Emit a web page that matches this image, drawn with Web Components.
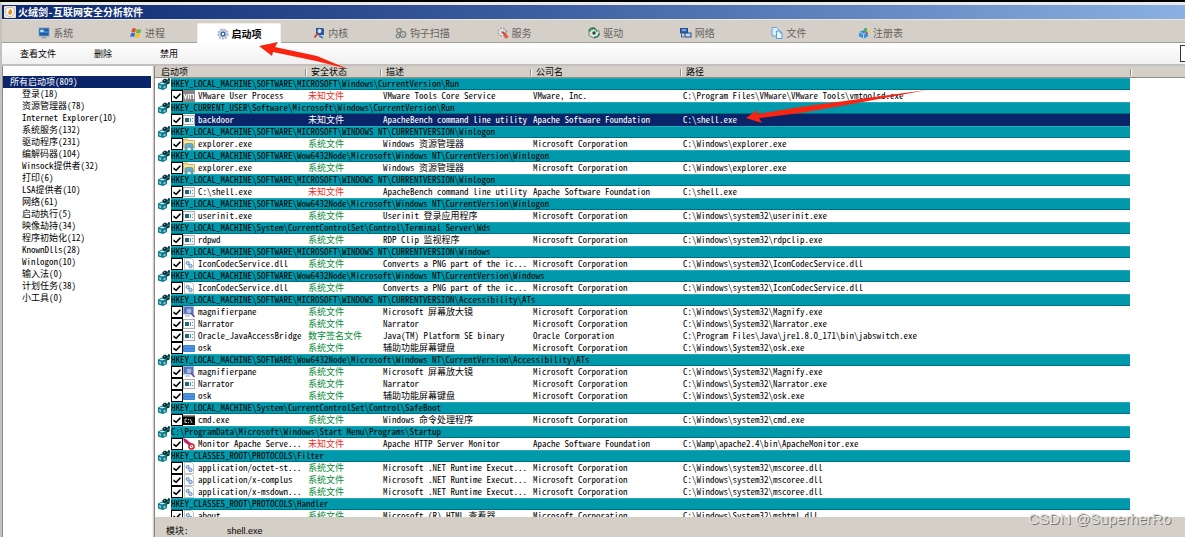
<!DOCTYPE html>
<html lang="zh-CN">
<head>
<meta charset="utf-8">
<title>火绒剑-互联网安全分析软件</title>
<style>
  html, body { margin: 0; height: 100%; }
  body {
    overflow: hidden;
    background: #d4d0c8;
    color: #000;
    font: 9px/12px "Noto Sans Mono CJK SC", "Noto Sans CJK SC", "Liberation Mono", monospace;
    font-feature-settings: "hwid";
  }
</style>
</head>
<body>
<hs-window>
  <hs-titlebar slot="title">火绒剑-互联网安全分析软件</hs-titlebar>
  <hs-tabs slot="tabs">
    <hs-tab icon="monitor">系统</hs-tab>
    <hs-tab icon="flag">进程</hs-tab>
    <hs-tab icon="gear" active>启动项</hs-tab>
    <hs-tab icon="kernel">内核</hs-tab>
    <hs-tab icon="hook">钩子扫描</hs-tab>
    <hs-tab icon="service">服务</hs-tab>
    <hs-tab icon="driver">驱动</hs-tab>
    <hs-tab icon="network">网络</hs-tab>
    <hs-tab icon="files">文件</hs-tab>
    <hs-tab icon="registry">注册表</hs-tab>
  </hs-tabs>
  <hs-toolbar slot="tools"></hs-toolbar>
  <hs-tree slot="side"></hs-tree>
  <hs-list slot="list"></hs-list>
  <hs-status slot="status" label="模块:">shell.exe</hs-status>
</hs-window>

<script>
const ICONS = {
  shield: '<rect width="12" height="12" rx="1" fill="#e9e4dc"/><path d="M6 1l4.300 1.500v3.500c0 2.500-2 4-4.300 5-2.300-1-4.300-2.500-4.300-5V2.500z" fill="#fff" stroke="#b9a48e" stroke-width=".7"/><path d="M6 2.500c2 2 2.500 3 2 4.500-.4 1.200-1.200 1.700-2 2-1.500-.5-2.300-2-1.500-3.500.5-1 1.200-1.500 1.500-3z" fill="#f0872a"/>',
  monitor: '<rect x="1" y="1" width="10" height="8" fill="#1f5fa8" stroke="#7e9cc0" stroke-width=".8"/><path d="M2.500 3h3v2h-3zM6.500 5h3" fill="#cfe6fb" stroke="#8fd0f5" stroke-width=".8"/><path d="M4 9.500h4l1 2H3z" fill="#9aa7b8"/>',
  flag: '<path d="M2.200 1.500Q4 .6 6 1.800L5.200 5.500Q3.200 4.500 1.300 5.400z" fill="#e2502a"/><path d="M6.700 2.100Q9 3 11.300 1.900l-.9 3.800Q8 6.700 5.900 5.800z" fill="#6db335"/><path d="M1.100 6.200Q3 5.400 5 6.300L4.200 10Q2.200 9 .2 9.900z" fill="#2f6fd0"/><path d="M5.700 6.600Q8 7.500 10.200 6.500l-.9 3.800Q7 11.300 4.900 10.300z" fill="#f4c020"/>',
  gear: '<circle cx="6" cy="6" r="4.800" fill="#d7dce6" stroke="#a9b1c2" stroke-width="1.600" stroke-dasharray="2 1.200"/><circle cx="6" cy="6" r="4" fill="#c3cee2"/><circle cx="6" cy="6" r="2.500" fill="#2d57a0"/><circle cx="6" cy="6" r="1.300" fill="#f2f6fc"/>',
  kernel: '<path d="M3 1h7l1 1v6H3z" fill="#2b5da8"/><circle cx="6.500" cy="4" r="2.600" fill="#cfe3fa" stroke="#243f80"/><path d="M5 6L1.500 10.500" stroke="#d33a2c" stroke-width="1.800"/><path d="M6 8.500l4 2.500" stroke="#3b78c4" stroke-width="1.600"/>',
  hook: '<g fill="none" stroke="#7d8482" stroke-width="1.300"><circle cx="4" cy="3.500" r="2.200"/><circle cx="8" cy="7.500" r="2.800"/><circle cx="3" cy="9" r="1.800"/></g><circle cx="8" cy="7.500" r="1" fill="#8fa7b0"/>',
  service: '<circle cx="5" cy="5" r="3.700" fill="#eeeeeb" stroke="#9c9c98" stroke-width="1.500" stroke-dasharray="1.800 1.200"/><circle cx="5" cy="5" r="1.500" fill="#b4b8ba"/><path d="M5.500 5l4.500 4.500" stroke="#d8402f" stroke-width="2.200"/><circle cx="9.200" cy="9.500" r="2" fill="#e05b48"/><path d="M7 2l4 3" stroke="#aaa"/>',
  driver: '<path d="M1 5l5-3.500L11 4v4.500L6 11 1 8.500z" fill="#dfe6df" stroke="#59756a" stroke-width=".8"/><path d="M1 4.500A5 4 0 016 1l1.500 1.500M11 6.500A5 4 0 016 10.500" fill="none" stroke="#29785b" stroke-width="1.600"/><circle cx="6" cy="6" r="1.700" fill="#24523f"/><circle cx="8.500" cy="4" r="1" fill="#3a9b58"/>',
  network: '<rect x=".5" y="1.500" width="7" height="4.500" fill="#2b66b8" stroke="#234a8c"/><rect x="5" y="6" width="6" height="4" fill="#bcd8f5" stroke="#234a8c"/><path d="M1.500 7v3h2.500" fill="none" stroke="#345fa0"/><path d="M2 3h4" stroke="#cbe2fa"/>',
  files: '<path d="M1 .5h4.500L7.500 2.500V9H1z" fill="#d7edfb" stroke="#5aa2d5" stroke-width=".9"/><path d="M5.500 4h3.500l2 2v5.500H5.500z" fill="#e9f6fe" stroke="#4a94cc" stroke-width=".9"/><path d="M9 4v2h2" fill="none" stroke="#4a94cc" stroke-width=".8"/>',
  registry: '<path d="M1 5l5-2 4 2v4.500L6 11.500 1 9.500z" fill="#3f93d2"/><path d="M1 5l4.500 2v4.200M5.500 7L10 5" fill="none" stroke="#bfe2f8" stroke-width=".8"/><path d="M6 1.500l3-.5v2.500l-3 .5z" fill="#3fae4d"/><path d="M9.500 2.500L12 3.500v2L9.500 5z" fill="#f1cc33"/><path d="M7.500 4.500L10 6 8 7.500z" fill="#d2433b"/>',
  reg: '<path d="M0 5.500l4-2 5 1v5.500L5 12 0 10.500z" fill="#0b7583"/><path d="M1.200 7l2 .7v2.500l-2-.7zM5.500 8.200l2-.8v2.300l-2 .8z" fill="#7fd3db"/><path d="M1 5.700l3-1.200 3.500.8L4.500 6.500z" fill="#b9eef2"/><path d="M4.500 2l2.500-1.500L9 1.500v2.500L7 5 4.500 4zM8.500 3l2-3 1.500.5-.5 5-2.500 1z" fill="#08303a"/><path d="M6 2.500h1M10 2.500v1.500" stroke="#4cbccb"/>',
  vm: '<rect y="0" width="12" height="12" fill="#858585"/><path d="M1 4l1.500 4.500L4 4M5.500 9V4.500l2 0V9M7.500 4.500h3V9" fill="none" stroke="#f4f4f4" stroke-width="1.200"/>',
  app: '<rect x=".5" y="1.500" width="11" height="9" fill="#f6f8f8" stroke="#a5afb4"/><rect x="2" y="4" width="4" height="4" fill="#1d6b74"/><path d="M7.500 4v4M9.500 4v1M9.500 7v1" stroke="#6b8e98"/>',
  folder: '<path d="M.5 1h4l1 1.500h6V10H.5z" fill="#f1d677" stroke="#b99b45" stroke-width=".7"/><path d="M1 4h10" stroke="#fff3bd"/><path d="M2 12V7.500q0-2 2-2h4q2 0 2 2V12H8V9H4v3z" fill="#5cb1de" stroke="#317fae" stroke-width=".5"/>',
  dll: '<path d="M1.500.5h7l2 2v9h-9z" fill="#fff" stroke="#adb5bc" stroke-width=".8"/><circle cx="4.700" cy="5" r="1.600" fill="#c6ddf2" stroke="#5484b8" stroke-width=".9"/><circle cx="7.500" cy="8" r="1.700" fill="#c6ddf2" stroke="#5484b8" stroke-width=".9"/>',
  magnify: '<rect x=".5" y=".500" width="10" height="7.500" fill="#4d75c8" stroke="#9db1dc"/><circle cx="6" cy="5" r="2.800" fill="#dce9ff" fill-opacity=".6" stroke="#6980a8"/><path d="M8 7l3.500 4" stroke="#6b4d8c" stroke-width="1.800"/><path d="M2 10h5" stroke="#b6c3dc" stroke-width="1.500"/>',
  keyboard: '<rect y="3" width="12" height="7" rx="1" fill="#3a83d6"/><path d="M1.500 5h9M1.500 8h9" stroke="#86b8ee" stroke-dasharray="1 1"/>',
  cmd: '<rect y="1.500" width="12" height="9.500" fill="#080808"/><path d="M0 2h12" stroke="#9a9a9a"/><path d="M4 5H2v3.500h2M5.500 5v1M5.500 8v1M7 5l2 4" fill="none" stroke="#ddd" stroke-width=".9"/>',
  feather: '<path d="M0 0l3 1 6 5-2 2L1 4z" fill="#d22a6c"/><path d="M1 1l6 6" stroke="#6c2b94"/><circle cx="8.500" cy="8.500" r="2.600" fill="#fff" stroke="#d81f26" stroke-width="1.500"/><path d="M7.500 7.500l2 2" stroke="#d81f26"/>'
};

const define = (name, css, html) => customElements.define(name, class extends HTMLElement {
  connectedCallback() {
    if (this.shadowRoot) return;
    const root = this.attachShadow({ mode: 'open' });
    root.innerHTML = `<style>:host,*{box-sizing:border-box}${css}</style>` + (typeof html === 'function' ? html(this) : html);
  }
});

define('hs-icon', ':host{display:block;flex:none;width:12px;height:12px}svg{display:block;width:100%;height:100%}',
  el => `<svg viewBox="0 0 12 12" aria-hidden="true">${ICONS[el.getAttribute('name')]}</svg>`);

define('hs-arrow', `
  :host{display:block;position:absolute;pointer-events:none;z-index:5}
  svg{display:block;width:100%;height:100%}`,
  el => `<svg viewBox="${el.getAttribute('box')}" aria-hidden="true"><path d="${el.getAttribute('shape')}" fill="#fb2410"/></svg>`);

define('hs-window', `
  :host{display:flex;flex-direction:column;height:100vh;border-top:2px solid #000;position:relative;overflow:hidden}
  .frame{display:flex;flex-direction:column;flex:1;min-height:0;border-top:3px solid #eceae6;border-left:2px solid #c4c2be}
  .body{display:flex;flex:1;min-height:0}
  .side{flex:0 0 150px;background:#fff;border-left:1px solid #8a8a86;overflow:hidden}
  .split{flex:0 0 3px;background:#d4d0c8;border-left:1px solid #f4f2ee;border-right:1px solid #86847e}
  .main{display:flex;flex-direction:column;flex:1;min-width:0}
  .list{flex:1;min-height:0;overflow:hidden;background:#fff}
  .first{left:259px;top:38px;width:90px;height:30px}
  .second{left:744px;top:84px;width:184px;height:40px}
  .mark{position:absolute;right:14px;bottom:9px;z-index:6;font:15px/18px "Liberation Sans",Arial,sans-serif;
    color:#e4e2df;text-shadow:1px 1px 0 #77756f}`,
  `<div class="frame">
    <slot name="title"></slot><slot name="tabs"></slot><slot name="tools"></slot>
    <div class="body">
      <div class="side"><slot name="side"></slot></div>
      <div class="split"></div>
      <div class="main"><div class="list"><slot name="list"></slot></div><slot name="status"></slot></div>
    </div>
  </div>
  <hs-arrow class="first" box="0 0 90 30" shape="M0 6L19 2 16 7 58 16 89 29 57 21 14 12 13 16z"></hs-arrow>
  <hs-arrow class="second" box="0 0 184 40" shape="M2 32L13 24 13 28 56 21 108 14 183 4 108 18 56 27 15 32 18 37z"></hs-arrow>
  <div class="mark">CSDN @SuperherRo</div>`);

define('hs-titlebar', `
  :host{display:flex;align-items:center;gap:2px;flex:0 0 14px;padding-left:2px;color:#fff;
    font-size:10px;font-weight:700;line-height:14px;background:linear-gradient(90deg,#0c2870,#3c5e9f 45%,#8ab1e2)}
  h1{margin:0;font:inherit}`,
  '<hs-icon name="shield"></hs-icon><h1><slot></slot></h1>');

define('hs-tabs', `
  :host{display:flex;flex:0 0 24px;padding:3px 0 0 8px;background:#d4d0c8;border-top:1px solid #e9e6df;border-bottom:1px solid #a09e99}`,
  '<slot></slot>');

define('hs-tab', `
  :host{display:flex;flex:0 0 7.8%;padding:0 4px}
  button{display:flex;flex:1;align-items:center;justify-content:center;gap:3px;border:1px solid transparent;border-bottom:0;
    padding:0;background:none;color:#66645f;font:inherit;font-size:10px;line-height:16px;white-space:nowrap}
  :host([active]) button{background:#fff;color:#000;font-weight:700;border-color:#f2f0ec;border-radius:2px 2px 0 0;margin-bottom:-1px}`,
  el => `<button type="button"${el.hasAttribute('active') ? ' aria-current="page"' : ''}><hs-icon name="${el.getAttribute('icon')}"></hs-icon><span><slot></slot></span></button>`);

define('hs-toolbar', `
  :host{display:flex;flex:0 0 23px;align-items:center;padding-left:18px;overflow:hidden;
    background:linear-gradient(#fff,#f0f0f0);border-bottom:2px solid #c2c0bc}
  button{border:0;padding:0;margin-right:38px;background:none;font:inherit;color:#000}
  button + button{margin-right:48px}
  input{margin:0 -115px 0 auto;width:120px;height:17px;border:1px solid #333;padding:0 3px;background:#fff;font:inherit}`,
  `<button type="button">查看文件</button><button type="button">删除</button><button type="button">禁用</button>
   <input type="text" aria-label="搜索">`);

const TREE = ['登录(18)', '资源管理器(78)', 'Internet Explorer(10)', '系统服务(132)', '驱动程序(231)', '编解码器(104)',
  'Winsock提供者(32)', '打印(6)', 'LSA提供者(10)', '网络(61)', '启动执行(5)', '映像劫持(34)', '程序初始化(12)',
  'KnownDlls(28)', 'Winlogon(10)', '输入法(0)', '计划任务(38)', '小工具(0)'];

define('hs-tree', `
  :host{display:block;padding:10px 1px 0 0}
  ul{list-style:none;margin:0;padding:0}
  button{display:block;width:100%;height:12px;border:0;padding:0 0 0 19px;background:none;color:#000;font:inherit;text-align:left;white-space:nowrap}
  .root{padding-left:7px;background:#0a246a;color:#fff}`,
  `<ul><li><button type="button" class="root">所有启动项(809)</button><ul>${TREE.map(t => `<li><button type="button">${t}</button></li>`).join('')}</ul></li></ul>`);

/* "#" opens a registry group; other lines are icon|name|status|description|company|path. */
const DATA = String.raw`
#HKEY_LOCAL_MACHINE\SOFTWARE\MICROSOFT\Windows\CurrentVersion\Run
vm|VMware User Process|未知文件|VMware Tools Core Service|VMware, Inc.|C:\Program Files\VMware\VMware Tools\vmtoolsd.exe
#HKEY_CURRENT_USER\Software\Microsoft\Windows\CurrentVersion\Run
app|backdoor|未知文件|ApacheBench command line utility|Apache Software Foundation|C:\shell.exe|selected
#HKEY_LOCAL_MACHINE\SOFTWARE\MICROSOFT\WINDOWS NT\CURRENTVERSION\Winlogon
folder|explorer.exe|系统文件|Windows 资源管理器|Microsoft Corporation|C:\Windows\explorer.exe
#HKEY_LOCAL_MACHINE\SOFTWARE\Wow6432Node\Microsoft\Windows NT\CurrentVersion\Winlogon
folder|explorer.exe|系统文件|Windows 资源管理器|Microsoft Corporation|C:\Windows\explorer.exe
#HKEY_LOCAL_MACHINE\SOFTWARE\MICROSOFT\WINDOWS NT\CURRENTVERSION\Winlogon
app|C:\shell.exe|未知文件|ApacheBench command line utility|Apache Software Foundation|C:\shell.exe
#HKEY_LOCAL_MACHINE\SOFTWARE\Wow6432Node\Microsoft\Windows NT\CurrentVersion\Winlogon
app|userinit.exe|系统文件|Userinit 登录应用程序|Microsoft Corporation|C:\Windows\system32\userinit.exe
#HKEY_LOCAL_MACHINE\System\CurrentControlSet\Control\Terminal Server\Wds
app|rdpwd|系统文件|RDP Clip 监视程序|Microsoft Corporation|C:\Windows\system32\rdpclip.exe
#HKEY_LOCAL_MACHINE\SOFTWARE\MICROSOFT\WINDOWS NT\CURRENTVERSION\Windows
dll|IconCodecService.dll|系统文件|Converts a PNG part of the ic...|Microsoft Corporation|C:\Windows\system32\IconCodecService.dll
#HKEY_LOCAL_MACHINE\SOFTWARE\Wow6432Node\Microsoft\Windows NT\CurrentVersion\Windows
dll|IconCodecService.dll|系统文件|Converts a PNG part of the ic...|Microsoft Corporation|C:\Windows\system32\IconCodecService.dll
#HKEY_LOCAL_MACHINE\SOFTWARE\MICROSOFT\WINDOWS NT\CURRENTVERSION\Accessibility\ATs
magnify|magnifierpane|系统文件|Microsoft 屏幕放大镜|Microsoft Corporation|C:\Windows\System32\Magnify.exe
app|Narrator|系统文件|Narrator|Microsoft Corporation|C:\Windows\System32\Narrator.exe
app|Oracle_JavaAccessBridge|数字签名文件|Java(TM) Platform SE binary|Oracle Corporation|C:\Program Files\Java\jre1.8.0_171\bin\jabswitch.exe
keyboard|osk|系统文件|辅助功能屏幕键盘|Microsoft Corporation|C:\Windows\System32\osk.exe
#HKEY_LOCAL_MACHINE\SOFTWARE\Wow6432Node\Microsoft\Windows NT\CurrentVersion\Accessibility\ATs
magnify|magnifierpane|系统文件|Microsoft 屏幕放大镜|Microsoft Corporation|C:\Windows\System32\Magnify.exe
app|Narrator|系统文件|Narrator|Microsoft Corporation|C:\Windows\System32\Narrator.exe
keyboard|osk|系统文件|辅助功能屏幕键盘|Microsoft Corporation|C:\Windows\System32\osk.exe
#HKEY_LOCAL_MACHINE\System\CurrentControlSet\Control\SafeBoot
cmd|cmd.exe|系统文件|Windows 命令处理程序|Microsoft Corporation|C:\Windows\system32\cmd.exe
#C:\ProgramData\Microsoft\Windows\Start Menu\Programs\Startup
feather|Monitor Apache Serve...|未知文件|Apache HTTP Server Monitor|Apache Software Foundation|C:\Wamp\apache2.4\bin\ApacheMonitor.exe
#HKEY_CLASSES_ROOT\PROTOCOLS\Filter
dll|application/octet-st...|系统文件|Microsoft .NET Runtime Execut...|Microsoft Corporation|C:\Windows\system32\mscoree.dll
dll|application/x-complus|系统文件|Microsoft .NET Runtime Execut...|Microsoft Corporation|C:\Windows\system32\mscoree.dll
dll|application/x-msdown...|系统文件|Microsoft .NET Runtime Execut...|Microsoft Corporation|C:\Windows\system32\mscoree.dll
#HKEY_CLASSES_ROOT\PROTOCOLS\Handler
dll|about|系统文件|Microsoft (R) HTML 查看器|Microsoft Corporation|C:\Windows\System32\mshtml.dll
`.trim().split('\n');

const rowHtml = line => {
  if (line[0] === '#') {
    return `<tr class="group"><th colspan="5" scope="rowgroup"><div class="line"><hs-icon name="reg"></hs-icon><span class="bar">${line.slice(1)}</span></div></th><td></td></tr>`;
  }
  const [icon, name, status, desc, company, path, sel] = line.split('|');
  const tone = status === '未知文件' ? 'bad' : 'good';
  return `<tr class="${sel || ''}"><td class="name"><label class="line"><input type="checkbox" checked><hs-icon name="${icon}"></hs-icon><span class="text">${name}</span></label></td>
    <td class="${tone}">${status}</td><td>${desc}</td><td>${company}</td><td>${path}</td><td class="rest"></td></tr>`;
};

define('hs-list', `
  :host{display:block}
  table{width:100%;table-layout:fixed;border-collapse:separate;border-spacing:0}
  .c1,.c3,.c4{width:150px}.c2{width:75px}.c5{width:450px}
  th,td{padding:0 0 0 3px;height:12px;line-height:12px;font-weight:400;text-align:left;white-space:nowrap}
  thead th{padding:0 0 0 6px;background:linear-gradient(90deg,#8e8c86 0 1px,#fff 1px 2px,transparent 2px) 0 3px/100% 7px no-repeat #d4d0c8;
    box-shadow:inset 0 -1px #8e8c86}
  thead th:first-child{background:#d4d0c8}
  .group th,.name{padding:0}
  .line{display:flex;align-items:center;height:12px}
  .group hs-icon{margin:0 1px 0 3px}
  .bar{flex:1;height:12px;background:#0099ab;border-bottom:1px solid #00707f;border-top:1px solid #23a9b8;line-height:10px}
  input{appearance:none;display:grid;place-items:center;flex:none;width:12px;height:12px;margin:0 0 0 16px;border:1px solid #000;background:#fff}
  input::before{content:"";width:8px;height:8px;background:#000;clip-path:polygon(8% 42%,38% 65%,88% 12%,98% 30%,40% 92%,4% 65%)}
  .text{flex:1;padding-left:3px}
  .good{color:#008a35}.bad{color:#ee2a1c}
  .selected td{background:#0a246a;color:#fff}
  .selected .name,.selected .rest{background:none}
  .selected .text{background:#0a246a}`,
  `<table><colgroup><col class="c1"><col class="c2"><col class="c3"><col class="c4"><col class="c5"><col></colgroup>
   <thead><tr><th>启动项</th><th>安全状态</th><th>描述</th><th>公司名</th><th>路径</th><th></th></tr></thead>
   <tbody>${DATA.map(rowHtml).join('')}</tbody></table>`);

define('hs-status', `
  :host{display:flex;flex:0 0 19px;align-items:center;padding:8px 0 0 11px;background:#d4d0c8}
  .key{flex:0 0 61px}
  .value{font:9px/12px "Liberation Sans",Arial,sans-serif}`,
  el => `<span class="key">${el.getAttribute('label')}</span><span class="value"><slot></slot></span>`);
</script>
</body>
</html>
